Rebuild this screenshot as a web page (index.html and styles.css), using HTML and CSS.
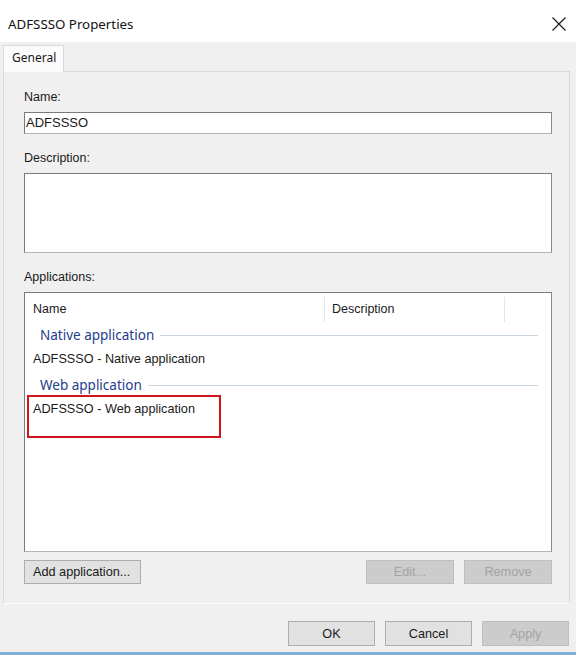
FILE: index.html
```html
<!DOCTYPE html>
<html>
<head>
<meta charset="utf-8">
<link rel="stylesheet" href="styles.css">
</head>
<body>
<div class="dialog">
  <div class="titlebar">
    <span class="title">ADFSSSO Properties</span>
    <svg class="close" width="16" height="16" viewBox="0 0 16 16"><path d="M1.5 1.5 L14.5 14.5 M14.5 1.5 L1.5 14.5" stroke="#1a1a1a" stroke-width="1.2" fill="none"/></svg>
  </div>
  <div class="tabs">
    <div class="tab">General</div>
  </div>
  <div class="panel">
    <div class="label first">Name:</div>
    <div class="input">ADFSSSO</div>
    <div class="label">Description:</div>
    <div class="textarea"></div>
    <div class="label">Applications:</div>
    <div class="list">
      <div class="list-head">
        <div class="col col-name">Name</div>
        <div class="col col-desc">Description</div>
        <div class="col col-rest"></div>
      </div>
      <div class="group"><span>Native application</span><i></i></div>
      <div class="item">ADFSSSO - Native application</div>
      <div class="group"><span>Web application</span><i></i></div>
      <div class="item">ADFSSSO - Web application</div>
      <div class="highlight"></div>
    </div>
    <div class="list-buttons">
      <button class="btn wide">Add application...</button>
      <span class="spacer"></span>
      <button class="btn disabled">Edit...</button>
      <button class="btn disabled">Remove</button>
    </div>
  </div>
  <div class="footer">
    <button class="btn">OK</button>
    <button class="btn">Cancel</button>
    <button class="btn disabled">Apply</button>
  </div>
  <div class="edge"></div>
</div>
</body>
</html>
```
FILE: styles.css
```css
* { box-sizing: border-box; }
html, body { margin: 0; padding: 0; }
body {
  width: 576px;
  height: 656px;
  background: #f0f0f0;
  font-family: "Liberation Sans", Arial, sans-serif;
  font-size: 12.7px;
  color: #1a1a1a;
  overflow: hidden;
}
.dialog { display: flex; flex-direction: column; height: 656px; }
.titlebar {
  height: 42px;
  background: #ffffff;
  display: flex;
  align-items: center;
  justify-content: space-between;
  padding: 5px 9px 0 8px;
}
.title { font-family: "Noto Sans", "Open Sans", sans-serif; font-size: 13.3px; color: #111; }
.close { display: block; }
.tabs {
  height: 29px;
  display: flex;
  align-items: flex-end;
  padding-left: 3px;
}
.tab {
  width: 61px;
  height: 27px;
  background: #fbfbfb;
  border: 1px solid #d9d9d9;
  border-bottom: none;
  padding: 4px 0 0 8px;
  line-height: 16px;
  font-family: "Noto Sans", "Open Sans", sans-serif;
  font-size: 12px;
  position: relative;
  top: 1px;
}
.panel {
  margin: 0 6px 0 3px;
  border: 1px solid #d9d9d9;
  border-bottom-color: #fdfdfd;
  padding: 0 17px 19px 20px;
  display: flex;
  flex-direction: column;
}
.label { line-height: 16px; margin-top: 16px; font-size: 12.5px; }
.label.first { margin-top: 17px; }
.input, .textarea, .list {
  background: #fff;
  border: 1px solid #7a7a7a;
  border-right-color: #8a8a8a;
  border-bottom-color: #b5b5b5;
  margin-top: 7px;
}
.input { height: 22px; line-height: 20px; padding-left: 1px; font-size: 13px; }
.textarea { height: 80px; }
.list { height: 260px; position: relative; }
.list-head { display: flex; height: 29px; font-size: 12.5px; }
.col { padding-left: 8px; margin: 4px 0 0; line-height: 25px; height: 25px; }
.col-name { width: 300px; border-right: 1px solid #e5e5e5; }
.col-desc { width: 180px; border-right: 1px solid #e5e5e5; padding-left: 7px; }
.col-rest { flex: 1; }
.group {
  display: flex;
  align-items: center;
  height: 26px;
  padding-left: 15px;
  padding-right: 13px;
  color: #1e3c8c;
  font-family: "Noto Sans", "Open Sans", sans-serif;
  font-size: 13.5px;
}
.group i { flex: 1; height: 1px; background: #c9d6e2; margin-left: 6px; }
.item { height: 24px; line-height: 22px; padding-left: 8px; }
.highlight {
  position: absolute;
  left: 2px;
  top: 102px;
  width: 194px;
  height: 43px;
  border: 2px solid #d0141c;
}
.list-buttons { display: flex; margin-top: 8px; gap: 10px; }
.spacer { flex: 1; }
.btn {
  font-family: inherit;
  font-size: 12.7px;
  height: 24px;
  width: 88px;
  background: #e1e1e1;
  border: 1px solid #adadad;
  color: #1a1a1a;
  padding: 0;
  margin: 0;
}
.btn.wide { width: 117px; text-align: left; padding-left: 8px; }
.btn.disabled { background: #cccccc; border-color: #bfbfbf; color: #a3a3a3; }
.footer {
  display: flex;
  justify-content: flex-end;
  gap: 10px;
  padding-right: 7px;
  margin-top: 17px;
}
.footer .btn { height: 25px; width: 87px; }
.edge { margin-top: auto; height: 4px; background: #7fb0d4; border-bottom: 1px solid #fff; }
```
